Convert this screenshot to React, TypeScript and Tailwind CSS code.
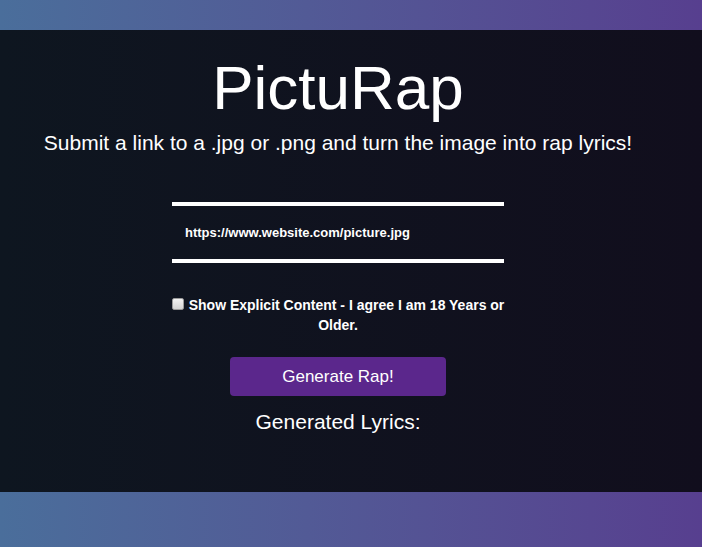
export default function App() {
  return (
    <div className="flex h-[547px] w-[702px] flex-col font-['Liberation_Sans',Arial,sans-serif] text-white">
      <div className="h-[30px] bg-gradient-to-r from-[#4a6e9b] to-[#573f8f]" />
      <main className="flex flex-1 flex-col items-center bg-gradient-to-r from-[#0e1620] to-[#110e1d] pr-[26px]">
        <h1 className="mt-[18px] text-[62px] leading-[80px] font-normal">PictuRap</h1>
        <p className="mt-[3px] text-[21px] leading-[24px]">
          Submit a link to a .jpg or .png and turn the image into rap lyrics!
        </p>

        <input
          type="text"
          defaultValue="https://www.website.com/picture.jpg"
          className="mt-[47px] h-[61px] w-[332px] border-y-4 border-white bg-transparent px-[13px] text-[13px] font-bold text-white outline-none"
        />

        <label className="mt-[32px] w-[352px] text-center text-[14px] leading-[20px] font-bold">
          <input
            type="checkbox"
            className="mr-[5px] h-[12px] w-[12px] appearance-none rounded-[2px] border border-[#9a9a9a] bg-gradient-to-b from-[#f2f2f2] to-[#d4d4d4] align-[0px]"
          />
          Show Explicit Content - I agree I am 18 Years or Older.
        </label>

        <button className="mt-[22px] h-[39px] w-[216px] rounded-[4px] bg-[#5b278c] text-[17px]">
          Generate Rap!
        </button>

        <h2 className="mt-[14px] text-[21px] leading-[24px]">Generated Lyrics:</h2>
      </main>
      <div className="h-[55px] bg-gradient-to-r from-[#4a6e9b] to-[#573f8f]" />
    </div>
  )
}
